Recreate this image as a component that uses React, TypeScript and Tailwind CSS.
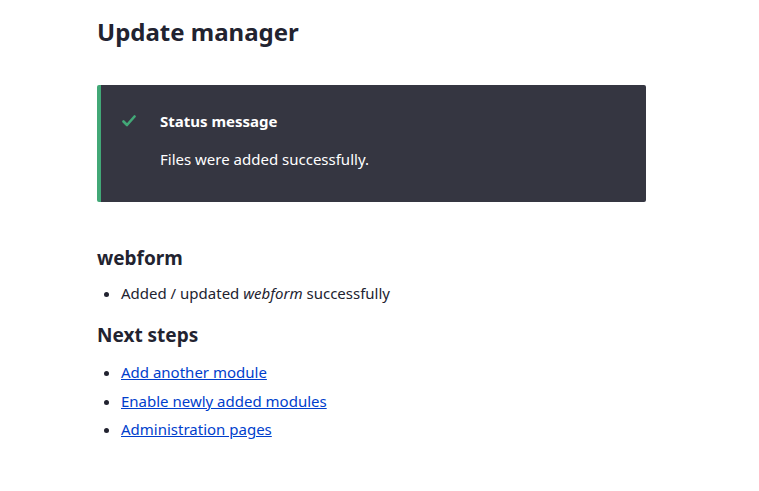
import React from "react";

export default function App() {
  return (
    <div className="min-h-[491px] bg-white text-[#222330]" style={{ fontFamily: '"Noto Sans", "Open Sans", sans-serif' }}>
      <div className="pl-[97px] pr-[113px] pt-[14px]">
        <h1 className="text-[24px] font-bold leading-[36px]">Update manager</h1>
        <div className="mt-[35px] flex h-[117px] w-[549px] rounded-[2px] border-l-[4px] border-[#42a877] bg-[#353641] text-white">
          <div className="pl-[21px] pt-[30px]">
            <svg width="14" height="12" viewBox="0 0 14 12">
              <path d="M1.5 6.5 L5 10 L12.5 1.5" fill="none" stroke="#42a877" strokeWidth="2.6" strokeLinecap="round" strokeLinejoin="round" />
            </svg>
          </div>
          <div className="pl-[24px] pt-[24px]">
            <div className="text-[15px] font-bold leading-[24px]">Status message</div>
            <div className="mt-[14px] text-[15px] leading-[24px]">Files were added successfully.</div>
          </div>
        </div>
        <h2 className="mt-[43px] text-[19px] font-bold leading-[26px]">webform</h2>
        <ul className="mt-[10px] list-disc pl-[24px] text-[15px] leading-[24px]">
          <li>
            Added / updated <em>webform</em> successfully
          </li>
        </ul>
        <h2 className="mt-[17px] text-[19px] font-bold leading-[26px]">Next steps</h2>
        <ul className="mt-[10px] list-disc pl-[24px] text-[15px] leading-[28.5px]">
          <li>
            <a href="#" className="text-[#003ecc] underline">Add another module</a>
          </li>
          <li>
            <a href="#" className="text-[#003ecc] underline">Enable newly added modules</a>
          </li>
          <li>
            <a href="#" className="text-[#003ecc] underline">Administration pages</a>
          </li>
        </ul>
      </div>
    </div>
  );
}
